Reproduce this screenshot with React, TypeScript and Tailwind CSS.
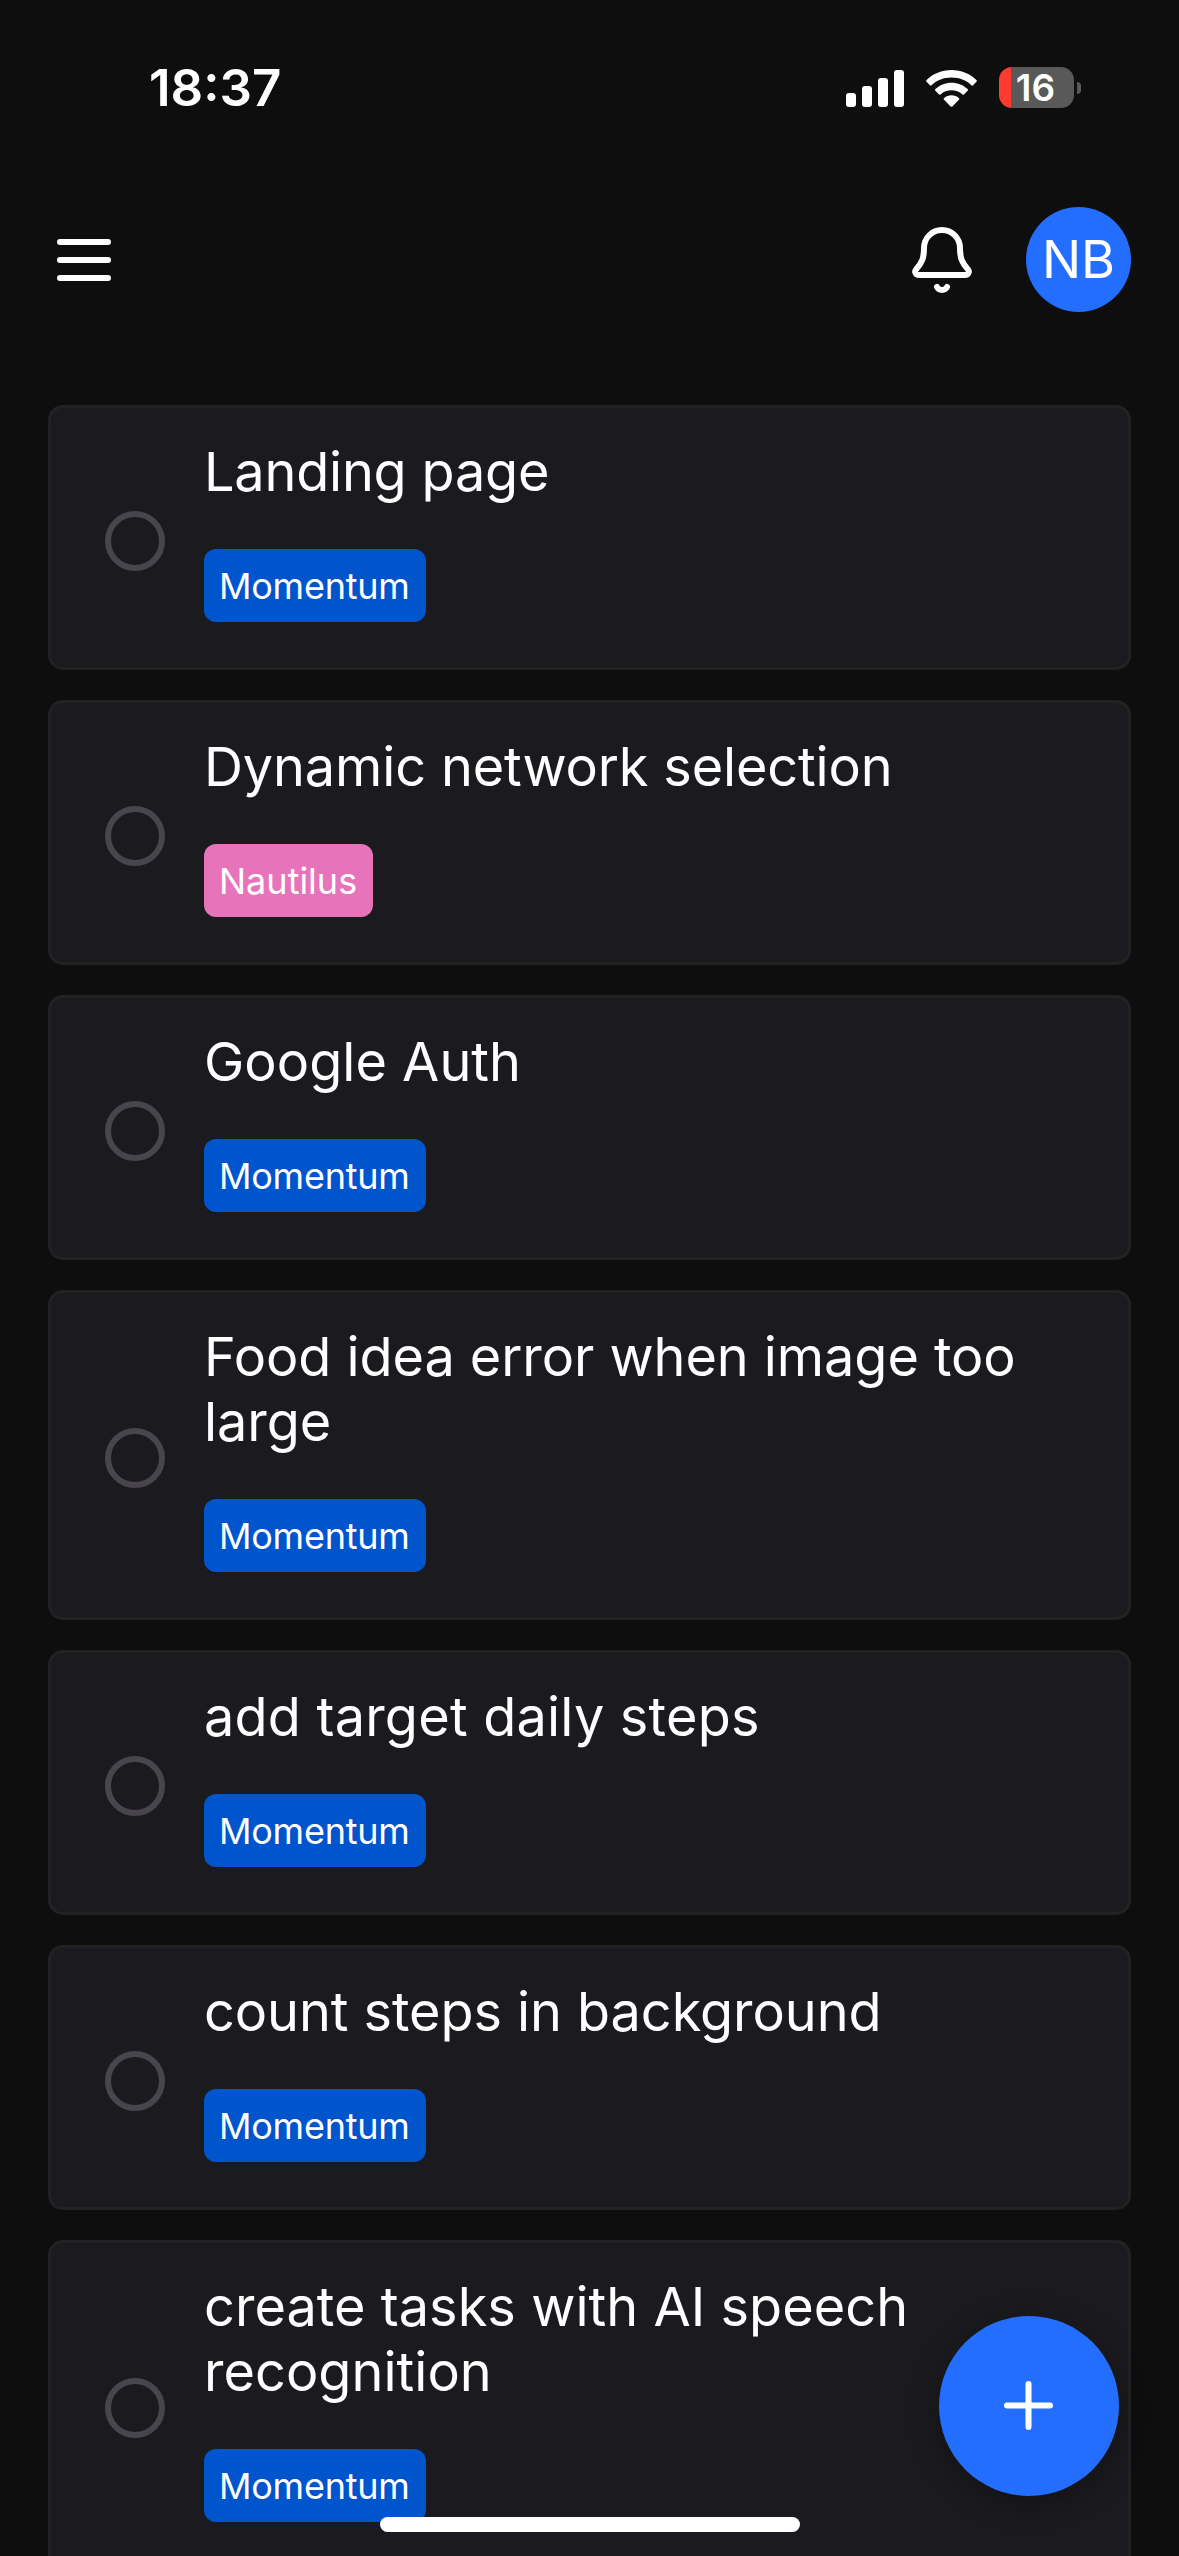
type Project = { name: string; style: string };

const momentum: Project = {
  name: "Momentum",
  style: "w-[222px] bg-[#0055cc] tracking-[-0.25px]",
};
const nautilus: Project = {
  name: "Nautilus",
  style: "w-[169px] bg-[#e774bb]",
};

const tasks: { title: string; tracking: string; project: Project }[] = [
  { title: "Landing page", tracking: "tracking-[-0.2px]", project: momentum },
  { title: "Dynamic network selection", tracking: "tracking-[-0.13px]", project: nautilus },
  { title: "Google Auth", tracking: "tracking-[0.03px]", project: momentum },
  { title: "Food idea error when image too large", tracking: "tracking-[-0.06px]", project: momentum },
  { title: "add target daily steps", tracking: "tracking-[0.22px]", project: momentum },
  { title: "count steps in background", tracking: "tracking-[-0.06px]", project: momentum },
  { title: "create tasks with AI speech recognition", tracking: "tracking-[0.05px]", project: momentum },
];

function StatusBar() {
  return (
    <div className="flex h-[176px] w-full items-center justify-between pl-[149px] pr-[98px]">
      <span className="-mt-[2px] text-[51px] font-semibold leading-none">18:37</span>
      <div className="flex items-center">
        <div className="flex h-[37px] items-end gap-[6px]">
          <span className="h-[14px] w-[10px] rounded-[3px] bg-white" />
          <span className="h-[21px] w-[10px] rounded-[3px] bg-white" />
          <span className="h-[29px] w-[10px] rounded-[3px] bg-white" />
          <span className="h-[37px] w-[10px] rounded-[3px] bg-white" />
        </div>
        <svg className="ml-[22px] h-[37px] w-[51px]" viewBox="0 0 51 37" fill="#fff">
          <path d="M25.5 0C35.2 0 44 3.8 50.4 10q.9.9 0 1.800l-3.300 3.400q-.9.900-1.800 0C40.100 10.300 33.200 7.600 25.500 7.600S10.900 10.300 5.700 15.200q-.9.900-1.800 0L.6 11.800q-.9-.9 0-1.800C7 3.800 15.800 0 25.500 0z" />
          <path d="M25.500 12.700c6.200 0 11.900 2.400 16.100 6.300q1 .9 0 1.800l-3.400 3.500q-.9.900-1.800.1c-2.900-2.600-6.700-4.100-10.900-4.100s-8 1.500-10.900 4.100q-.9.800-1.800-.1l-3.400-3.500q-1-.9 0-1.800c4.200-3.900 9.900-6.300 16.100-6.300z" />
          <path d="M25.500 25.300c2.800 0 5.300 1 7.300 2.700q1 .9.100 1.800l-6.500 6.600q-.9.900-1.800 0l-6.500-6.600q-.9-.9.100-1.800c2-1.700 4.500-2.700 7.300-2.700z" />
        </svg>
        <div className="-mt-px ml-[22px] flex h-[41px] w-[75px] items-center justify-center rounded-[13px] bg-[linear-gradient(to_right,#ff3b30_12px,#595959_12px)] pr-[2px]">
          <span className="text-[37px] font-semibold leading-[41px]">16</span>
        </div>
        <span className="ml-[3px] h-[12px] w-[4px] rounded-r-full bg-[#595959]" />
      </div>
    </div>
  );
}

function Header() {
  return (
    <header className="flex h-[168px] items-center pl-[57px] pr-[48px]">
      <button className="flex w-[54px] flex-col gap-[12px]" aria-label="Menu">
        <span className="h-[6px] rounded-full bg-white" />
        <span className="h-[6px] rounded-full bg-white" />
        <span className="h-[6px] rounded-full bg-white" />
      </button>
      <button className="ml-auto" aria-label="Notifications">
        <svg
          className="h-[66px] w-[60px]"
          viewBox="0 0 60 66"
          fill="none"
          stroke="#fff"
          strokeWidth="6"
          strokeLinecap="round"
          strokeLinejoin="round"
        >
          <path d="M12 21C12 11 20 3 30 3s18 8 18 18c0 10 2 15 8 21.500 2 2.500 0 5.500-3 5.500H7c-3 0-5-3-3-5.500C10 36 12 31 12 21z" />
          <path d="M25 60c2 4 8 4 10 0" />
        </svg>
      </button>
      <div className="-mt-px ml-[54px] flex size-[105px] items-center justify-center rounded-full bg-[#236eff]">
        <span className="text-[52px] leading-none">NB</span>
      </div>
    </header>
  );
}

function TaskCard({ title, tracking, project }: (typeof tasks)[number]) {
  return (
    <li className="flex items-center rounded-[15px] border-[3px] border-[#222222] bg-[#1b1a1e] pb-[45px] pl-[54px] pr-[60px] pt-[31px]">
      <button
        className="mt-[20px] size-[60px] shrink-0 rounded-full border-[6px] border-[#48464c]"
        aria-label="Complete task"
      />
      <div className="ml-[39px] flex flex-col items-start gap-[45px]">
        <p className={`text-[54px] leading-[65px] ${tracking}`}>{title}</p>
        <span
          className={`flex h-[73px] items-center rounded-[12px] px-[15px] text-[36px] ${project.style}`}
        >
          {project.name}
        </span>
      </div>
    </li>
  );
}

export default function App() {
  return (
    <div className="relative h-[2556px] w-[1179px] overflow-hidden bg-[#0e0e0e] font-['Inter',sans-serif] text-white">
      <StatusBar />
      <Header />
      <ul className="flex flex-col gap-[30px] px-[48px] pt-[61px]">
        {tasks.map((task) => (
          <TaskCard key={task.title} {...task} />
        ))}
      </ul>
      <button
        className="absolute bottom-[60px] right-[60px] flex size-[180px] items-center justify-center rounded-full bg-[#236eff] shadow-[0_6px_30px_rgba(0,0,0,0.35)]"
        aria-label="Add task"
      >
        <svg
          className="mb-px mr-px size-[49px]"
          viewBox="0 0 49 49"
          stroke="#fff"
          strokeWidth="6"
          strokeLinecap="round"
        >
          <path d="M24.500 3v43M3 24.500h43" />
        </svg>
      </button>
      <div className="absolute bottom-[24px] left-[380px] h-[15px] w-[420px] rounded-full bg-white" />
    </div>
  );
}
